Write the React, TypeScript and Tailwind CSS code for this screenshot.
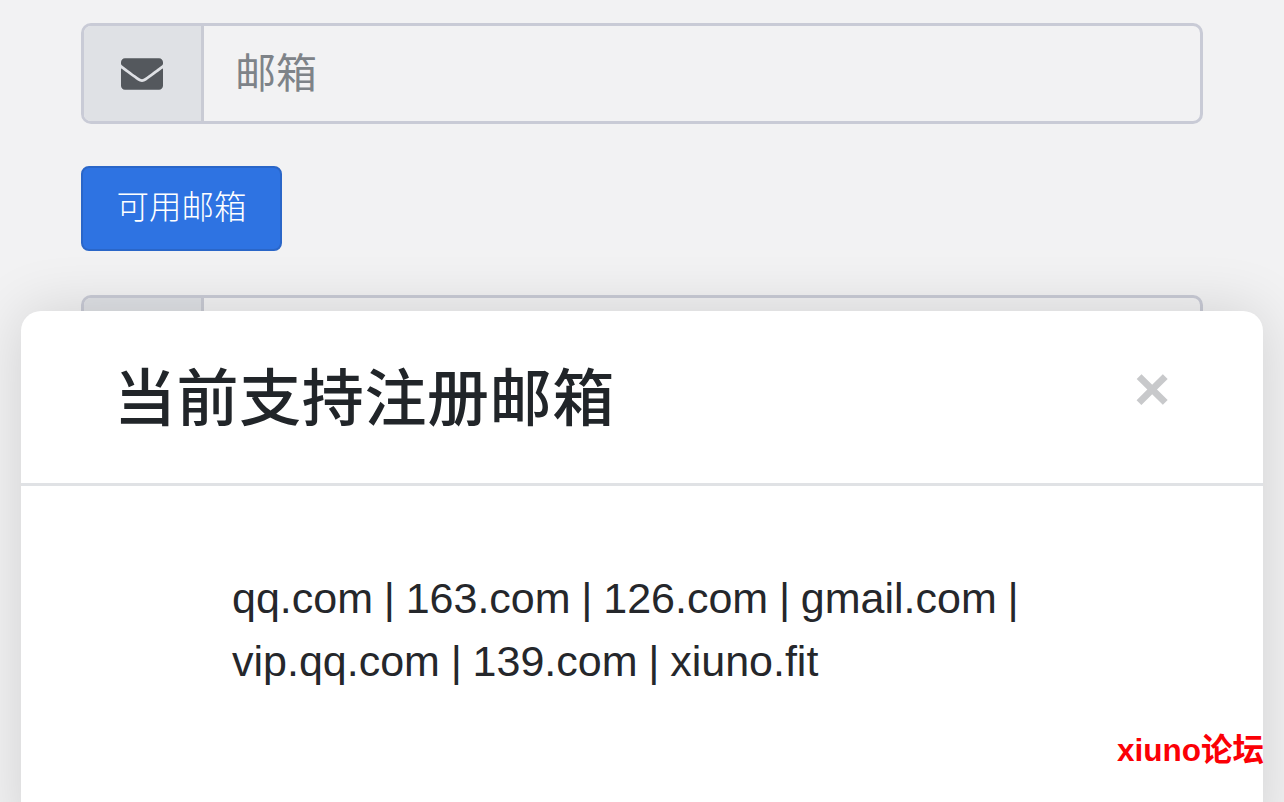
import React from 'react';
import { FaEnvelope } from 'react-icons/fa';

const fontStack = "font-['Liberation_Sans','Noto_Sans_CJK_SC',sans-serif]";

const InputRow = ({ placeholder }: { placeholder: string }) => (
  <div className="flex h-[101px] rounded-[10px] border-[3px] border-[#c9cbd6] bg-[#f2f2f3] overflow-hidden">
    <div className="w-[120px] shrink-0 flex items-center justify-center pr-[2px] bg-[#dfe1e5] border-r-[3px] border-[#c9cbd4]">
      <FaEnvelope className="text-[#54585d] text-[42px]" />
    </div>
    <div className="flex-1 flex items-center pl-[31px] pt-[2px] text-[41px] text-[#7e8388]">{placeholder}</div>
  </div>
);

export default function App() {
  return (
    <div className={`relative w-[1284px] h-[802px] overflow-hidden bg-[#f2f2f3] ${fontStack}`}>
      {/* page behind the dialog */}
      <div className="pt-[23px] px-[81px]">
        <div className="w-[1122px]">
          <InputRow placeholder="邮箱" />
          <button className="mt-[42px] w-[201px] h-[85px] rounded-[8px] bg-[#2e73e2] border-[2px] border-[#2a66c8] text-white text-[32.5px] font-light">
            可用邮箱
          </button>
          <div className="mt-[44px]">
            <InputRow placeholder="" />
          </div>
        </div>
      </div>

      {/* dialog */}
      <div className="absolute left-[21px] top-[311px] w-[1242px] h-[530px] rounded-[20px] bg-white shadow-[0_0_60px_rgba(0,0,0,0.14)]">
        <div className="relative h-[175px] border-b-[3px] border-[#e0e2e5] pl-[93px] pt-[51px]">
          <h2 className="text-[62px] leading-[76px] font-medium tracking-[0.6px] text-[#212529]">当前支持注册邮箱</h2>
          <span className="absolute left-[1113px] top-[42px] text-[62px] leading-[72px] font-bold text-[#c8c9cb]">×</span>
        </div>
        <p className="pl-[211px] pt-[81px] w-[1020px] text-[43px] leading-[63px] [word-spacing:-1.2px] text-[#25272b]">
          qq.com | 163.com | 126.com | gmail.com | vip.qq.com | 139.com | xiuno.fit
        </p>
      </div>

      {/* forum watermark */}
      <span className="absolute left-[1117px] top-[731px] text-[31.5px] leading-[38px] font-bold text-[#fb0006]">xiuno论坛</span>
    </div>
  );
}
